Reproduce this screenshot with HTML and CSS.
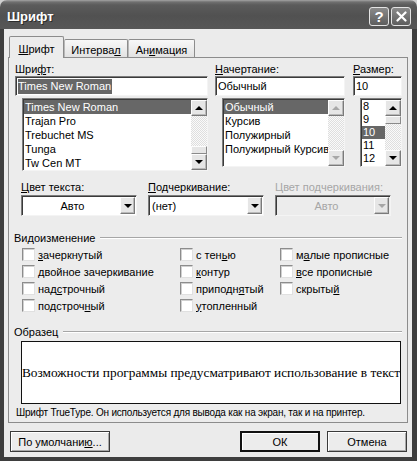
FILE: index.html
```html
<!DOCTYPE html>
<html lang="ru">
<head>
  <meta charset="UTF-8">
  <meta name="viewport" content="width=device-width, initial-scale=1.0">
  <title>Шрифт</title>
  <link rel="stylesheet" href="styles.css">
</head>
<body>
  <div class="window">
    <div class="titlebar">
      <span class="title">Шрифт</span>
      <div class="caption-buttons">
        <span class="caption-btn">?</span>
        <span class="caption-btn">
          <svg width="11" height="11" viewBox="0 0 11 11"><path d="M1.5 1.5 L9.5 9.5 M9.5 1.5 L1.5 9.5" stroke="#fff" stroke-width="2.2" stroke-linecap="round"/></svg>
        </span>
      </div>
    </div>

    <div class="frame">
      <!-- Tabs -->
      <div class="tabs">
        <span class="tab active"><u>Ш</u>рифт</span>
        <span class="tab tab-interval">Интерва<u>л</u></span>
        <span class="tab tab-anim">Ан<u>и</u>мация</span>
      </div>

      <div class="panel">
        <div class="pickers">
          <div class="picker picker-font">
            <div class="label">Шри<u>ф</u>т:</div>
            <div class="field"><span class="hl">Times New Roman</span></div>
            <div class="listbox listbox-font">
              <ul class="items">
                <li class="selected">Times New Roman</li>
                <li>Trajan Pro</li>
                <li>Trebuchet MS</li>
                <li>Tunga</li>
                <li>Tw Cen MT</li>
              </ul>
              <div class="scrollbar">
                <span class="sb-btn"><span class="arrow up"></span></span>
                <span class="sb-track end"><span class="sb-thumb"></span></span>
                <span class="sb-btn"><span class="arrow down"></span></span>
              </div>
            </div>
          </div>

          <div class="picker picker-style">
            <div class="label"><u>Н</u>ачертание:</div>
            <div class="field">Обычный</div>
            <div class="listbox">
              <ul class="items">
                <li class="selected">Обычный</li>
                <li>Курсив</li>
                <li>Полужирный</li>
                <li>Полужирный Курсив</li>
              </ul>
              <div class="scrollbar disabled">
                <span class="sb-btn"><span class="arrow up"></span></span>
                <span class="sb-track"></span>
                <span class="sb-btn"><span class="arrow down"></span></span>
              </div>
            </div>
          </div>

          <div class="picker picker-size">
            <div class="label"><u>Р</u>азмер:</div>
            <div class="field">10</div>
            <div class="listbox listbox-size">
              <ul class="items">
                <li>8</li>
                <li>9</li>
                <li class="selected">10</li>
                <li>11</li>
                <li>12</li>
              </ul>
              <div class="scrollbar">
                <span class="sb-btn"><span class="arrow up"></span></span>
                <span class="sb-track"><span class="sb-thumb"></span></span>
                <span class="sb-btn"><span class="arrow down"></span></span>
              </div>
            </div>
          </div>
        </div>

        <div class="colors">
          <div class="combo-group">
            <div class="label"><u>Ц</u>вет текста:</div>
            <div class="combo center">
              <span class="combo-value">Авто</span>
              <span class="combo-btn"><span class="arrow down"></span></span>
            </div>
          </div>
          <div class="combo-group">
            <div class="label"><u>П</u>одчеркивание:</div>
            <div class="combo">
              <span class="combo-value">(нет)</span>
              <span class="combo-btn"><span class="arrow down"></span></span>
            </div>
          </div>
          <div class="combo-group disabled">
            <div class="label">Цвет подчеркивания:</div>
            <div class="combo center">
              <span class="combo-value">Авто</span>
              <span class="combo-btn"><span class="arrow down"></span></span>
            </div>
          </div>
        </div>

        <div class="legend">Видоизменение</div>
        <div class="effects">
          <label class="check"><span class="box"></span><span><u>з</u>ачеркнутый</span></label>
          <label class="check"><span class="box"></span><span><u>д</u>войное зачеркивание</span></label>
          <label class="check"><span class="box"></span><span>над<u>с</u>трочный</span></label>
          <label class="check"><span class="box"></span><span>подстроч<u>н</u>ый</span></label>
          <label class="check"><span class="box"></span><span>с тен<u>ь</u>ю</span></label>
          <label class="check"><span class="box"></span><span><u>к</u>онтур</span></label>
          <label class="check"><span class="box"></span><span>приподн<u>я</u>тый</span></label>
          <label class="check"><span class="box"></span><span><u>у</u>топленный</span></label>
          <label class="check"><span class="box"></span><span>м<u>а</u>лые прописные</span></label>
          <label class="check"><span class="box"></span><span><u>в</u>се прописные</span></label>
          <label class="check"><span class="box"></span><span>скрыты<u>й</u></span></label>
        </div>

        <div class="legend legend-sample">Образец</div>
        <div class="sample">Возможности программы предусматривают использование в текст</div>
        <p class="note">Шрифт TrueType. Он используется для вывода как на экран, так и на принтер.</p>
      </div>

      <div class="actions">
        <button class="btn btn-wide">По умолчани<u>ю</u>...</button>
        <button class="btn btn-default">ОК</button>
        <button class="btn">Отмена</button>
      </div>
    </div>
  </div>
</body>
</html>
```

FILE: styles.css
```css
html, body {
  margin: 0;
}

body {
  background: #cfcfcf;
  font-family: "Liberation Sans", Arial, sans-serif;
  font-size: 11px;
  color: #000;
}

u {
  text-decoration: underline;
  text-underline-offset: 1px;
}

.window {
  width: 417px;
  height: 461px;
  display: flex;
  flex-direction: column;
}

/* Title bar */
.titlebar {
  height: 29px;
  flex: none;
  box-sizing: border-box;
  display: flex;
  align-items: center;
  justify-content: space-between;
  padding: 3px 6px 0 7px;
  border-radius: 7px 7px 0 0;
  background: linear-gradient(#a4a4a4 0, #707070 2px, #5b5b5b 5px, #515151 55%, #575757 100%);
}

.title {
  color: #fff;
  font-weight: bold;
  font-size: 13px;
  text-shadow: 1px 1px #2c2c2c;
}

.caption-buttons {
  display: flex;
  gap: 2px;
}

.caption-btn {
  width: 20px;
  height: 19px;
  box-sizing: border-box;
  border: 1px solid #e4e4e4;
  border-radius: 3px;
  background: linear-gradient(#8a8a8a, #5e5e5e);
  color: #fff;
  font-weight: bold;
  font-size: 15px;
  line-height: 17px;
  text-align: center;
  display: flex;
  align-items: center;
  justify-content: center;
}

/* Window frame */
.frame {
  flex: 1;
  display: flex;
  flex-direction: column;
  background: #ebebeb;
  border: solid #3e3e3e;
  border-width: 0 5px 4px 4px;
  padding-top: 7px;
}

/* Tabs */
.tabs {
  display: flex;
  align-items: flex-end;
  height: 22px;
  margin: 0 0 -1px 5px;
  position: relative;
  z-index: 1;
}

.tab {
  box-sizing: border-box;
  height: 18px;
  width: 64px;
  margin-bottom: 1px;
  padding-top: 3px;
  line-height: 14px;
  text-align: center;
  border: 1px solid #8c8c8c;
  border-bottom: none;
  border-left-color: #b8b8b8;
  border-radius: 2px 2px 0 0;
  background: linear-gradient(#f8f8f8, #e2e2e2);
}

.tab.active {
  width: 55px;
  height: 22px;
  margin-bottom: 0;
  padding-top: 5px;
  background: #ececec;
  border-color: #8c8c8c;
}

.tab-anim {
  width: 67px;
}

/* Tab panel */
.panel {
  margin: 0 4px;
  height: 366px;
  box-sizing: border-box;
  border: 1px solid #8c8c8c;
  background: #ececec;
  padding: 5px 5px 1px 6px;
}

.label {
  height: 13px;
  line-height: 13px;
  white-space: nowrap;
}

/* Font / style / size pickers */
.pickers {
  display: flex;
}

.picker-font {
  width: 193px;
}

.picker-style {
  width: 130px;
  margin-left: 7px;
}

.picker-size {
  width: 49px;
  margin-left: 8px;
}

.field {
  height: 20px;
  box-sizing: border-box;
  background: #fff;
  border: 1px solid;
  border-color: #7c7c7c #f4f4f4 #f4f4f4 #7c7c7c;
  box-shadow: inset 1px 1px 0 #3a3a3a;
  padding: 2px 0 0 2px;
  line-height: 15px;
  white-space: nowrap;
  overflow: hidden;
}

.field .hl {
  background: #676767;
  color: #fff;
  display: inline-block;
  padding-right: 1px;
}

.listbox {
  display: flex;
  height: 69px;
  margin: 2px 0 0 7px;
  box-sizing: border-box;
  background: #fff;
  border: 1px solid;
  border-color: #7c7c7c #f4f4f4 #f4f4f4 #7c7c7c;
  box-shadow: inset 1px 1px 0 #3a3a3a;
  padding: 1px 0 0 1px;
  overflow: hidden;
}

.listbox-font {
  height: 73px;
}

.items {
  flex: 1;
  list-style: none;
  margin: 0;
  padding: 0;
  min-width: 0;
}

.items li {
  height: 14px;
  line-height: 14px;
  padding-left: 1px;
  white-space: nowrap;
}

.listbox-size .items li {
  height: 13px;
  line-height: 13px;
}

.items li.selected {
  background: #676767;
  color: #fff;
}

/* Scroll bars */
.scrollbar {
  width: 16px;
  display: flex;
  flex-direction: column;
  background-color: #fafafa;
  background-image: conic-gradient(#dedede 25%, #fafafa 0 50%, #dedede 0 75%, #fafafa 0);
  background-size: 2px 2px;
}

.sb-btn {
  height: 16px;
  flex: none;
  box-sizing: border-box;
  background: #e6e6e6;
  border: 1px solid;
  border-color: #fdfdfd #7a7a7a #7a7a7a #fdfdfd;
  box-shadow: inset -1px -1px 0 #b9b9b9;
  display: flex;
  align-items: center;
  justify-content: center;
}

.sb-track {
  flex: 1;
  display: flex;
  flex-direction: column;
}

.sb-track.end {
  justify-content: flex-end;
}

.sb-thumb {
  height: 8px;
  box-sizing: border-box;
  background: #e6e6e6;
  border: 1px solid;
  border-color: #fdfdfd #8a8a8a #8a8a8a #fdfdfd;
}

.arrow {
  width: 0;
  height: 0;
  border-left: 4px solid transparent;
  border-right: 4px solid transparent;
}

.arrow.up {
  border-bottom: 4px solid #000;
}

.arrow.down {
  border-top: 4px solid #000;
}

.scrollbar.disabled .arrow.up {
  border-bottom-color: #a8a8a8;
}

.scrollbar.disabled .arrow.down {
  border-top-color: #a8a8a8;
}

/* Colour / underline combos */
.colors {
  display: flex;
  margin-top: 10px;
  padding-left: 6px;
}

.combo-group {
  width: 118px;
  margin-right: 11px;
}

.combo-group .label {
  margin-bottom: 1px;
}

.combo {
  height: 21px;
  box-sizing: border-box;
  display: flex;
  align-items: center;
  background: #fff;
  border: 1px solid;
  border-color: #7c7c7c #f4f4f4 #f4f4f4 #7c7c7c;
  box-shadow: inset 1px 1px 0 #3a3a3a;
  padding: 1px 1px 1px 2px;
}

.combo-value {
  flex: 1;
  padding-left: 1px;
}

.combo.center .combo-value {
  text-align: center;
}

.combo-btn {
  width: 15px;
  height: 17px;
  box-sizing: border-box;
  background: #e6e6e6;
  border: 1px solid;
  border-color: #fdfdfd #7a7a7a #7a7a7a #fdfdfd;
  box-shadow: inset -1px -1px 0 #b9b9b9;
  display: flex;
  align-items: center;
  justify-content: center;
}

.combo-group.disabled {
  color: #a6a6a6;
}

.combo-group.disabled .combo {
  background: #ececec;
}

.combo-group.disabled .arrow.down {
  border-top-color: #a6a6a6;
}

/* Group headings */
.legend {
  display: flex;
  align-items: center;
  margin: 15px 0 0 -1px;
  line-height: 14px;
  height: 14px;
}

.legend::after {
  content: "";
  flex: 1;
  border-top: 1px solid #a6a6a6;
  border-bottom: 1px solid #fff;
  margin-left: 5px;
}

.legend-sample {
  margin-top: 11px;
}

/* Effects */
.effects {
  display: grid;
  grid-template-columns: 158px 100px 1fr;
  grid-template-rows: repeat(4, 17px);
  grid-auto-flow: column;
  margin-top: 1px;
  padding-left: 7px;
}

.check {
  display: flex;
  align-items: center;
  white-space: nowrap;
}

.box {
  width: 13px;
  height: 13px;
  box-sizing: border-box;
  margin-right: 3px;
  background: #fff;
  border: 1px solid;
  border-color: #8c8c8c #e0e0e0 #e0e0e0 #8c8c8c;
  box-shadow: inset 1px 1px 0 #d0d0d0;
}

/* Sample */
.sample {
  height: 63px;
  margin: 2px 1px 0 6px;
  box-sizing: border-box;
  border: 1px solid #111;
  background: #fff;
  display: flex;
  align-items: center;
  justify-content: center;
  overflow: hidden;
  white-space: nowrap;
  font-family: "Liberation Serif", "Times New Roman", serif;
  font-size: 13.33px;
}

.note {
  margin: 2px 0 0 1px;
  line-height: 14px;
  font-size: 10px;
  letter-spacing: -0.2px;
  white-space: nowrap;
}

/* Dialog buttons */
.actions {
  display: flex;
  margin-top: 8px;
  padding: 0 5px 0 6px;
}

.btn {
  width: 80px;
  height: 21px;
  padding: 0;
  font: inherit;
  color: #000;
  background: #ececec;
  border: 1px solid #3a3a3a;
  box-shadow: inset 1px 1px 0 #fff, inset -1px -1px 0 #a8a8a8;
}

.btn-wide {
  width: 100px;
}

.btn-default {
  margin-left: auto;
  margin-right: 7px;
  border-color: #111;
  box-shadow: inset 0 0 0 1px #111, inset 2px 2px 0 #fff;
}
```
